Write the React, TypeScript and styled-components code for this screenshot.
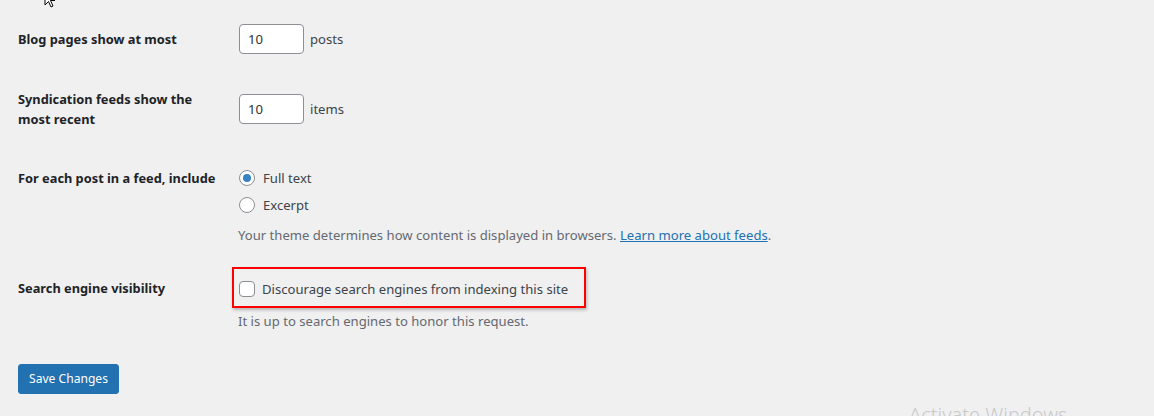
import React from "react";
import styled, { createGlobalStyle } from "styled-components";

const Global = createGlobalStyle`
  html, body {
    margin: 0;
    padding: 0;
    background: #f0f0f1;
    overflow: hidden;
    width: 1154px;
    height: 416px;
  }
  body {
    font-family: "Noto Sans", "Open Sans", sans-serif;
    color: #1d2327;
    font-size: 13px;
  }
`;

const Page = styled.div`
  position: relative;
  width: 1154px;
  height: 416px;
  padding: 9px 0 0 18px;
  box-sizing: border-box;
`;

const FormTable = styled.div`
  display: grid;
  grid-template-columns: 210px 1fr;
`;

const Th = styled.div<{ $pt: number; $pb?: number; $lh?: number }>`
  padding: ${(p) => p.$pt}px 10px ${(p) => p.$pb ?? 20}px 0;
  font-weight: 700;
  font-size: 12.8px;
  line-height: ${(p) => p.$lh ?? 18}px;
  color: #1d2327;
`;

const Td = styled.div<{ $pt: number; $pb?: number }>`
  padding: ${(p) => p.$pt}px 10px ${(p) => p.$pb ?? 15}px 10px;
  font-size: 13.1px;
  line-height: 18px;
  color: #3c434a;
`;

const InlineRow = styled.div`
  display: flex;
  align-items: center;
  gap: 5px;
`;

const NumberInput = styled.div`
  box-sizing: border-box;
  width: 65px;
  height: 30px;
  margin: 0 1px;
  border: 1px solid #8c8f94;
  border-radius: 4px;
  background: #fff;
  color: #2c3338;
  padding: 0 8px;
  display: flex;
  align-items: center;
  font-size: 13.1px;
`;

const RadioLine = styled.label<{ $h: number }>`
  display: flex;
  align-items: center;
  gap: 8px;
  height: ${(p) => p.$h}px;
  color: #3c434a;
`;

const Radio = styled.span<{ $checked?: boolean }>`
  box-sizing: border-box;
  width: 16px;
  height: 16px;
  margin-left: 1px;
  border-radius: 50%;
  border: 1px solid #8c8f94;
  background: #fff;
  display: inline-flex;
  align-items: center;
  justify-content: center;
  &::after {
    content: "";
    display: ${(p) => (p.$checked ? "block" : "none")};
    width: 8px;
    height: 8px;
    border-radius: 50%;
    background: #3582c4;
  }
`;

const Description = styled.p<{ $mt: number }>`
  margin: ${(p) => p.$mt}px 0 0;
  color: #646970;
  font-size: 13.1px;
  line-height: 18px;
`;

const Link = styled.a`
  color: #2271b1;
  text-decoration: underline;
`;

const CheckWrap = styled.div`
  position: relative;
  height: 30px;
  display: flex;
  align-items: center;
`;

const Checkbox = styled.span`
  box-sizing: border-box;
  width: 16px;
  height: 16px;
  margin: 0 7px 0 1px;
  border: 1px solid #8c8f94;
  border-radius: 4px;
  background: #fff;
`;

const Highlight = styled.div`
  position: absolute;
  left: -6px;
  top: -7px;
  width: 354px;
  height: 41px;
  box-sizing: border-box;
  border: 2px solid #ff0000;
  box-shadow: 1px 2px 3px rgba(0, 0, 0, 0.25);
  pointer-events: none;
`;

const Submit = styled.div`
  padding-top: 19px;
`;

const Button = styled.button`
  box-sizing: border-box;
  height: 30px;
  padding: 0 10px;
  background: #2271b1;
  border: 1px solid #2271b1;
  border-radius: 3px;
  color: #fff;
  font-family: inherit;
  font-size: 12.1px;
  line-height: 28px;
  cursor: pointer;
`;

const Watermark = styled.div`
  position: absolute;
  left: 909px;
  top: 401px;
  font-size: 20px;
  font-weight: 300;
  color: #c9c9c9;
  white-space: nowrap;
`;

const Cursor = styled.svg`
  position: absolute;
  left: 44px;
  top: -10px;
`;

export default function App() {
  return (
    <>
      <Global />
      <Page>
        <Cursor width="16" height="20" viewBox="0 0 16 20">
          <path d="M1 1 L1 15 L4.5 11.5 L7 17 L9 16 L6.5 10.5 L11 10.5 Z" fill="#fff" stroke="#000" strokeWidth="1" />
        </Cursor>
        <FormTable>
          <Th $pt={21}>Blog pages show at most</Th>
          <Td $pt={15}>
            <InlineRow>
              <NumberInput>10</NumberInput>
              <span>posts</span>
            </InlineRow>
          </Td>

          <Th $pt={20} $lh={20}>
            Syndication feeds show the
            <br />
            most recent
          </Th>
          <Td $pt={25}>
            <InlineRow>
              <NumberInput>10</NumberInput>
              <span>items</span>
            </InlineRow>
          </Td>

          <Th $pt={20}>For each post in a feed, include</Th>
          <Td $pt={15}>
            <RadioLine $h={28}>
              <Radio $checked />
              Full text
            </RadioLine>
            <RadioLine $h={26}>
              <Radio />
              Excerpt
            </RadioLine>
            <Description $mt={8}>
              Your theme determines how content is displayed in browsers.{" "}
              <Link href="#">Learn more about feeds</Link>.
            </Description>
          </Td>

          <Th $pt={20}>Search engine visibility</Th>
          <Td $pt={15}>
            <CheckWrap>
              <Checkbox />
              Discourage search engines from indexing this site
              <Highlight />
            </CheckWrap>
            <Description $mt={8}>It is up to search engines to honor this request.</Description>
          </Td>
        </FormTable>
        <Submit>
          <Button>Save Changes</Button>
        </Submit>
        <Watermark>Activate Windows</Watermark>
      </Page>
    </>
  );
}
